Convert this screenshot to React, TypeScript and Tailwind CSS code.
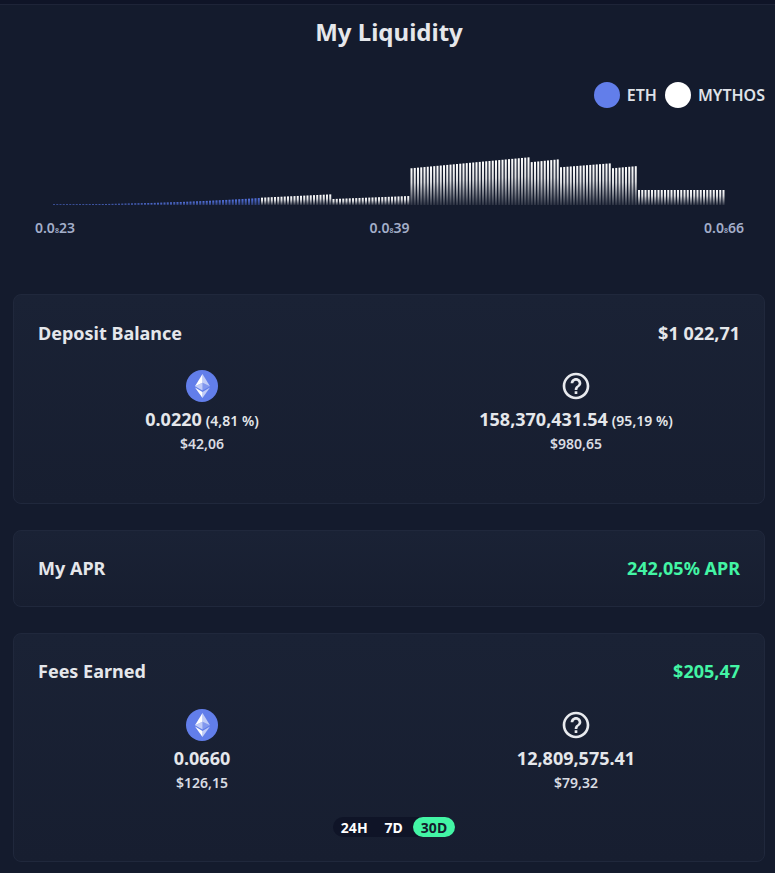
import { MdHelpOutline } from "react-icons/md";

const font = "font-['Noto_Sans','Open_Sans',sans-serif]";

type Segment = { from: number; to: number; h0: number; h1: number; curve?: number };

const segments: Segment[] = [
  { from: 53, to: 259, h0: 0.6, h1: 7, curve: 2 },
  { from: 260, to: 331, h0: 7.3, h1: 10.7 },
  { from: 332, to: 409, h0: 6, h1: 9 },
  { from: 410, to: 528, h0: 36.7, h1: 47.7 },
  { from: 529, to: 558, h0: 42.7, h1: 45.7 },
  { from: 559, to: 610, h0: 37.7, h1: 41.7 },
  { from: 611, to: 637, h0: 36.7, h1: 39 },
  { from: 638, to: 724, h0: 15, h1: 15 },
];

const PITCH = 3.25;
const bars = Array.from({ length: 207 }, (_, i) => {
  const x = 53 + i * PITCH;
  const seg = segments.find((s) => x < s.to) ?? segments[segments.length - 1];
  const t = Math.min(1, Math.max(0, (x - seg.from) / (seg.to - seg.from)));
  const h = seg.h0 + (seg.h1 - seg.h0) * Math.pow(t, seg.curve ?? 1);
  return { x, h, blue: x < 259 };
});

const LiquidityChart = () => (
  <svg width="775" height="70" viewBox="0 150 775 70" className="block">
    <defs>
      <linearGradient id="white-bar" x1="0" y1="0" x2="0" y2="1">
        <stop offset="0" stopColor="#ffffff" />
        <stop offset="0.4" stopColor="#ffffff" stopOpacity="0.85" />
        <stop offset="1" stopColor="#ffffff" stopOpacity="0.1" />
      </linearGradient>
      <linearGradient id="blue-bar" x1="0" y1="0" x2="0" y2="1">
        <stop offset="0" stopColor="#5575e6" />
        <stop offset="1" stopColor="#5575e6" stopOpacity="0.35" />
      </linearGradient>
    </defs>
    {bars.map((b) => (
      <rect
        key={b.x}
        x={b.x}
        y={205 - b.h}
        width={2}
        height={b.h}
        fill={b.blue ? "url(#blue-bar)" : "url(#white-bar)"}
      />
    ))}
  </svg>
);

const EthIcon = () => (
  <svg width="32" height="32" viewBox="0 0 32 32">
    <circle cx="16" cy="16" r="16" fill="#627eea" />
    <path fill="#fff" fillOpacity=".602" d="M16.498 4v8.87l7.497 3.35z" />
    <path fill="#fff" d="M16.498 4L9 16.22l7.498-3.35z" />
    <path fill="#fff" fillOpacity=".602" d="M16.498 21.968v6.027L24 17.616z" />
    <path fill="#fff" d="M16.498 27.995v-6.028L9 17.616z" />
    <path fill="#fff" fillOpacity=".2" d="M16.498 20.573l7.497-4.353-7.497-3.348z" />
    <path fill="#fff" fillOpacity=".602" d="M9 16.22l7.498 4.353v-7.701z" />
  </svg>
);

const TokenStat = ({
  icon,
  amount,
  share,
  usd,
}: {
  icon: "eth" | "unknown";
  amount: string;
  share?: string;
  usd: string;
}) => (
  <div className="flex flex-col items-center">
    {icon === "eth" ? <EthIcon /> : <MdHelpOutline size={32} className="text-[#e8eaee]" />}
    <p className="mt-[4px] h-[26px] text-[18px] leading-[26px] font-bold text-[#e5e7eb]">
      {amount}
      {share && <span className="ml-1 text-[14px] font-semibold">{share}</span>}
    </p>
    <p className="mt-[3px] text-[14px] leading-[18px] font-semibold text-[#d9dce2]">{usd}</p>
  </div>
);

const Card = ({
  className,
  children,
}: {
  className: string;
  children: React.ReactNode;
}) => (
  <div
    className={`mr-[10px] ml-[13px] rounded-lg border border-[#20283c] bg-linear-to-b from-[#1a2235] to-[#171e30] px-6 ${className}`}
  >
    {children}
  </div>
);

const Price = ({ children }: { children: React.ReactNode }) => (
  <span className="text-[#a3aec9]">{children}</span>
);

export default function App() {
  return (
    <div className={`${font} min-h-[873px] w-[775px] overflow-hidden bg-[#141b2d]`}>
      <div className="h-[5px] border-b border-[#1e2438] bg-[#0f1427]" />
      <h1 className="mt-[10px] pl-[3px] text-center text-[24px] leading-[33px] font-bold text-[#e5e7eb]">
        My Liquidity
      </h1>

      <div className="mt-[34px] flex h-[26px] items-center justify-end pr-[10px] text-[16px] font-semibold text-[#dfe2e8]">
        <span className="h-[26px] w-[26px] rounded-full bg-[#627eea]" />
        <span className="ml-[7px]">ETH</span>
        <span className="ml-2 h-[26px] w-[26px] rounded-full bg-white" />
        <span className="ml-[7px]">MYTHOS</span>
      </div>

      <div className="mt-[42px]">
        <LiquidityChart />
      </div>

      <div className="mt-[-2px] flex justify-between pr-[31px] pl-[35px] text-[14px] leading-[19px] font-semibold">
        <Price>
          0.0<span className="text-[7px]">8</span>23
        </Price>
        <Price>
          0.0<span className="text-[7px]">8</span>39
        </Price>
        <Price>
          0.0<span className="text-[7px]">8</span>66
        </Price>
      </div>

      <Card className="mt-[54px] h-[210px] pt-[25px]">
        <div className="flex items-center justify-between text-[18px] leading-[26px] font-bold text-[#e5e7eb]">
          <span>Deposit Balance</span>
          <span>$1 022,71</span>
        </div>
        <div className="mt-[24px] grid grid-cols-2 gap-[46px]">
          <TokenStat icon="eth" amount="0.0220" share="(4,81 %)" usd="$42,06" />
          <TokenStat icon="unknown" amount="158,370,431.54" share="(95,19 %)" usd="$980,65" />
        </div>
      </Card>

      <Card className="mt-[26px] flex h-[77px] items-center justify-between text-[18px] font-bold text-[#e5e7eb]">
        <span>My APR</span>
        <span className="text-[#43f5a5]">242,05% APR</span>
      </Card>

      <Card className="mt-[26px] h-[229px] pt-[24px]">
        <div className="flex items-center justify-between text-[18px] leading-[26px] font-bold text-[#e5e7eb]">
          <span>Fees Earned</span>
          <span className="text-[#43f5a5]">$205,47</span>
        </div>
        <div className="mt-[25px] grid grid-cols-2 gap-[46px]">
          <TokenStat icon="eth" amount="0.0660" usd="$126,15" />
          <TokenStat icon="unknown" amount="12,809,575.41" usd="$79,32" />
        </div>
        <div className="mt-[25px] flex justify-center pl-[10px]">
          <div className="flex h-5 items-center rounded-full bg-[#0f1427] text-[14px] font-bold text-white">
            <span className="px-2">24H</span>
            <span className="px-[9px]">7D</span>
            <span className="ml-px flex h-5 items-center rounded-full bg-[#43f5a5] px-2 text-[#141b2d]">30D</span>
          </div>
        </div>
      </Card>
    </div>
  );
}
